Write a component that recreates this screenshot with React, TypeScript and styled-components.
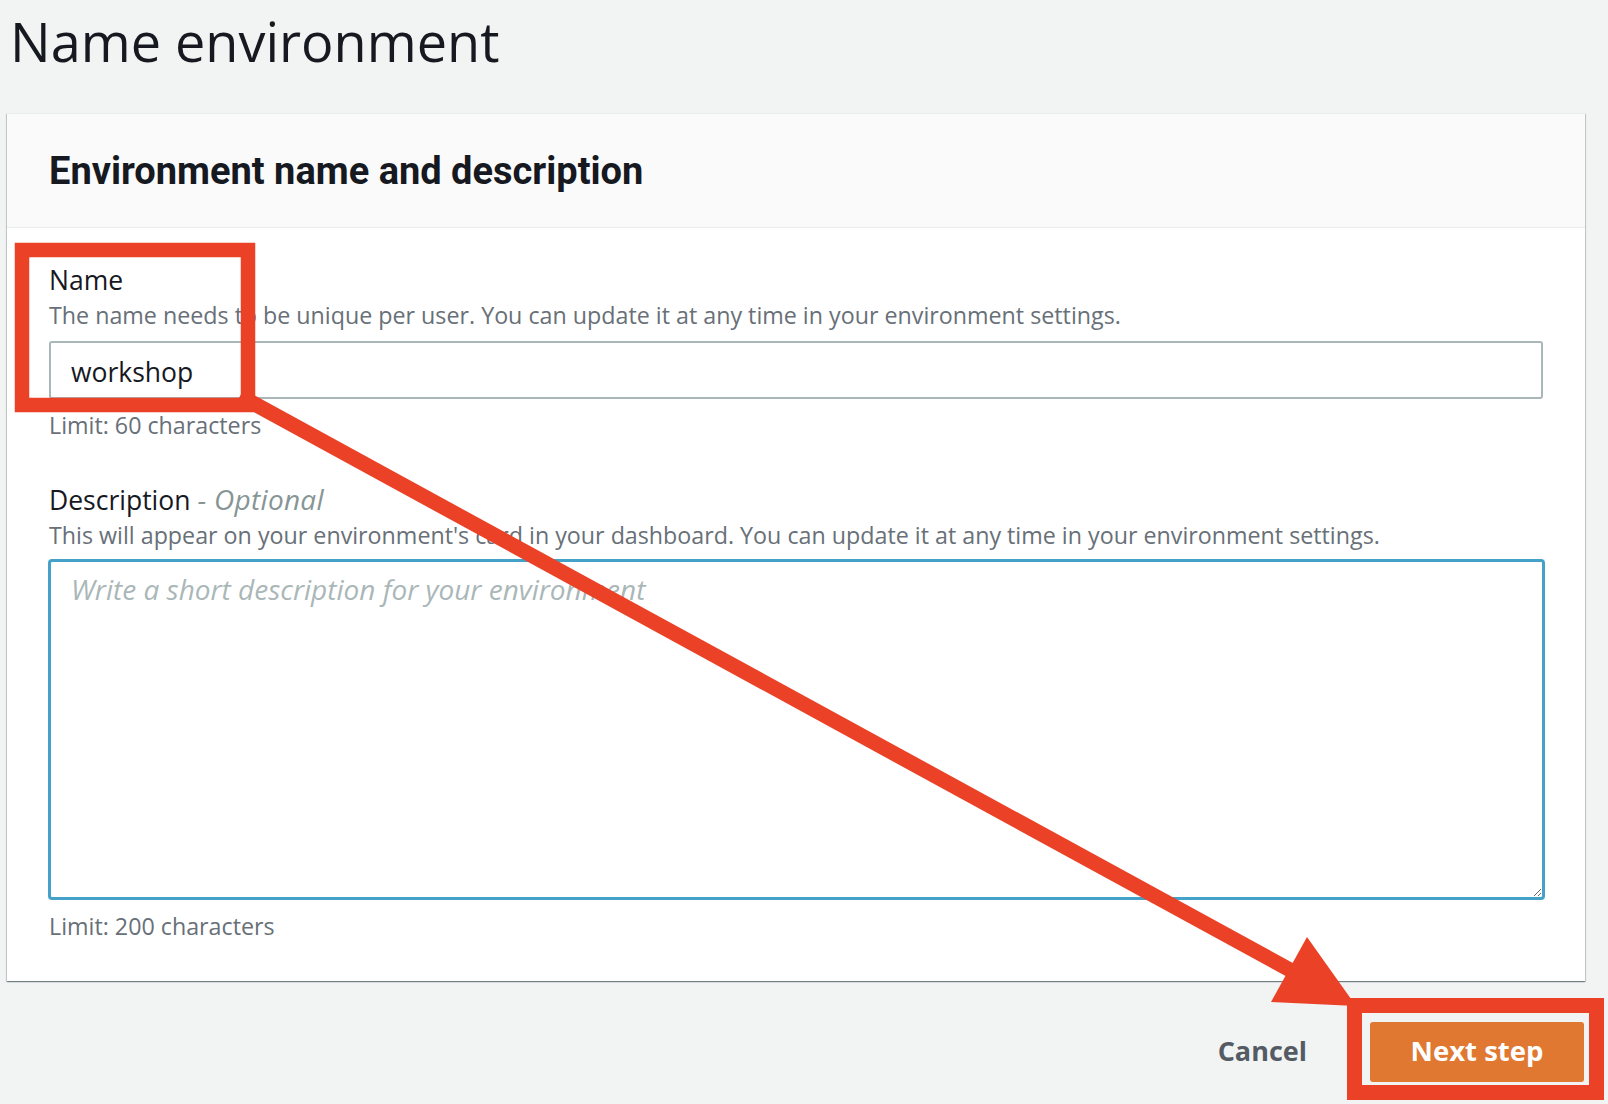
import React from "react";
import styled, { createGlobalStyle } from "styled-components";

const GlobalStyle = createGlobalStyle`
  html, body { margin: 0; padding: 0; }
  body {
    background: #f2f3f3;
    font-family: "Open Sans", Roboto, "Liberation Sans", Arial, sans-serif;
    color: #16191f;
  }
  * { box-sizing: border-box; }
`;

const Page = styled.div`
  position: relative;
  width: 1608px;
  height: 1104px;
  overflow: hidden;
  padding: 11px 23px 0 7px;
`;

const Title = styled.h1`
  margin: 0 0 0 3px;
  font-size: 54px;
  line-height: 60px;
  font-weight: 400;
  color: #16191f;
`;

const Card = styled.section`
  margin-top: 42px;
  background: #ffffff;
  border-top: 1px solid #eaeded;
  box-shadow: 0 1px 1px 0 rgba(0, 28, 36, 0.35),
    1px 1px 1px 0 rgba(0, 28, 36, 0.15),
    -1px 1px 1px 0 rgba(0, 28, 36, 0.15);
`;

const CardHeader = styled.header`
  height: 114px;
  display: flex;
  align-items: center;
  padding-left: 42px;
  background: #fafafa;
  border-bottom: 1px solid #eaeded;
`;

const Heading = styled.h2`
  margin: 0;
  font-family: Roboto, "Open Sans", sans-serif;
  font-size: 38px;
  line-height: 48px;
  font-weight: 700;
  color: #16191f;
`;

const CardBody = styled.div`
  padding: 35px 42px 40px 42px;
  display: flex;
  flex-direction: column;
`;

const Field = styled.div<{ $gapTop?: number }>`
  display: flex;
  flex-direction: column;
  margin-top: ${(p) => p.$gapTop ?? 0}px;
`;

const Label = styled.label`
  font-size: 26.5px;
  line-height: 34px;
  color: #16191f;
`;

const Optional = styled.span`
  font-style: italic;
  font-size: 28px;
  line-height: 1;
  letter-spacing: 0.3px;
  color: #879596;
`;

const Help = styled.div<{ $top?: number }>`
  font-size: 23.25px;
  line-height: 30px;
  color: #687078;
  margin-top: ${(p) => p.$top ?? 0}px;
`;

const TextInput = styled.input`
  margin-top: 11px;
  height: 58px;
  width: 100%;
  border: 2px solid #aab7b8;
  border-radius: 3px;
  padding: 3px 20px 0 20px;
  font-family: inherit;
  font-size: 26.5px;
  color: #16191f;
  background: #fff;
  outline: none;
`;

const TextArea = styled.textarea`
  margin: 9px -2px 0 -1px;
  height: 341px;
  width: calc(100% + 3px);
  border: 3px solid #44a2c9;
  border-radius: 4px;
  padding: 9.5px 20px;
  font-family: inherit;
  font-size: 28px;
  line-height: 34px;
  color: #16191f;
  background: #fff;
  outline: none;
  resize: vertical;
  &::placeholder {
    color: #aab7b8;
    font-style: italic;
  }
`;

const Footer = styled.div`
  margin-top: 41px;
  display: flex;
  justify-content: flex-end;
  align-items: center;
  gap: 63px;
  padding-right: 1px;
`;

const LinkButton = styled.button`
  border: none;
  background: none;
  padding: 0 0 4px 0;
  font-family: inherit;
  font-size: 27px;
  font-weight: 700;
  color: #545b64;
  cursor: pointer;
`;

const PrimaryButton = styled.button`
  width: 214px;
  height: 60px;
  border: none;
  border-radius: 3px;
  padding: 0 0 4px 0;
  background: #e07832;
  color: #ffffff;
  font-family: inherit;
  font-size: 27.5px;
  font-weight: 700;
  cursor: pointer;
`;

const Annotation = styled.svg`
  position: absolute;
  left: 0;
  top: 0;
  pointer-events: none;
`;

const RED = "#ea4127";

export default function App() {
  return (
    <>
      <GlobalStyle />
      <Page>
        <Title>Name environment</Title>
        <Card>
          <CardHeader>
            <Heading>Environment name and description</Heading>
          </CardHeader>
          <CardBody>
            <Field>
              <Label>Name</Label>
              <Help $top={3}>
                The name needs to be unique per user. You can update it at any time in your environment settings.
              </Help>
              <TextInput defaultValue="workshop" />
              <Help $top={11}>Limit: 60 characters</Help>
            </Field>
            <Field $gapTop={43}>
              <Label>
                Description <Optional>- Optional</Optional>
              </Label>
              <Help $top={3}>
                This will appear on your environment's card in your dashboard. You can update it at any time in your environment settings.
              </Help>
              <TextArea placeholder="Write a short description for your environment" />
              <Help $top={11}>Limit: 200 characters</Help>
            </Field>
          </CardBody>
        </Card>
        <Footer>
          <LinkButton>Cancel</LinkButton>
          <PrimaryButton>Next step</PrimaryButton>
        </Footer>
        <Annotation width={1608} height={1104} viewBox="0 0 1608 1104">
          <line x1={240} y1={396} x2={1292} y2={971} stroke={RED} strokeWidth={15} />
          <polygon points="1307,937 1271,1002 1356,1006" fill={RED} />
          <rect x={22} y={250} width={226} height={155} fill="none" stroke={RED} strokeWidth={14.5} />
          <rect x={1354.5} y={1005.5} width={242} height={87} fill="none" stroke={RED} strokeWidth={15} />
        </Annotation>
      </Page>
    </>
  );
}
